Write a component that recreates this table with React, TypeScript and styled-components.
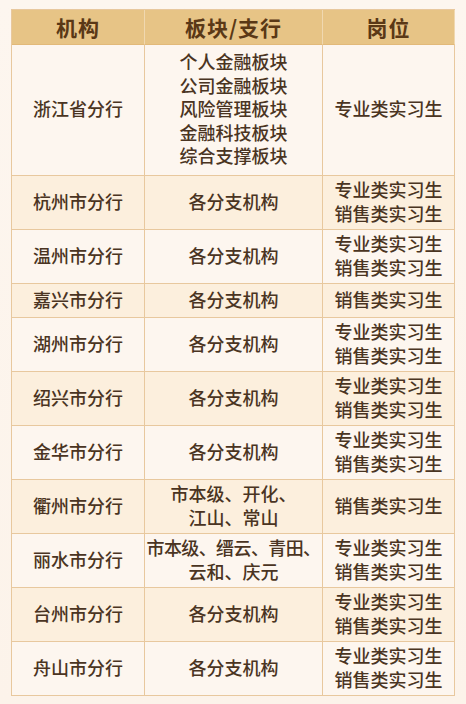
import React from "react";
import styled, { createGlobalStyle } from "styled-components";

const GlobalStyle = createGlobalStyle`
  html, body {
    margin: 0;
    padding: 0;
    background: #fdf5ee;
  }
  body {
    font-family: "Noto Sans CJK SC", "Noto Sans", sans-serif;
    color: #4a3422;
  }
`;

const Page = styled.div`
  width: 466px;
  height: 704px;
  box-sizing: border-box;
  padding: 9px 11px 0 11px;
  background: linear-gradient(180deg, #fdf6ef 0%, #fcf3ea 100%);
`;

const Table = styled.div`
  width: 444px;
  border-top: 1px solid #e8c89e;
  border-left: 1px solid #e8c89e;
  box-sizing: border-box;
`;

const Row = styled.div<{ $bg: string; $minH: number }>`
  display: grid;
  grid-template-columns: 133px 178px 132px;
  min-height: ${(p) => p.$minH}px;
  background: ${(p) => p.$bg};
`;

const HeadCell = styled.div`
  display: flex;
  align-items: center;
  justify-content: center;
  height: 34px;
  background: #e7c486;
  border-right: 1px solid #f0d8b0;
  border-bottom: 1px solid #e2b979;
  font-size: 21px;
  font-weight: 700;
  color: #5a3816;
  letter-spacing: 1px;
`;

const Cell = styled.div`
  display: flex;
  flex-direction: column;
  align-items: center;
  justify-content: center;
  padding: 2px 2px 4px;
  border-right: 1px solid #e8c89e;
  border-bottom: 1px solid #e8c89e;
  font-size: 18px;
  font-weight: 500;
  line-height: 23.5px;
  text-align: center;
  white-space: nowrap;
`;

const Line = styled.span<{ $tight?: boolean }>`
  letter-spacing: ${(p) => (p.$tight ? "-0.6px" : "0")};
`;

type Item = { org: string; branch: string[]; post: string[]; minH?: number };

const rows: Item[] = [
  {
    org: "浙江省分行",
    branch: ["个人金融板块", "公司金融板块", "风险管理板块", "金融科技板块", "综合支撑板块"],
    post: ["专业类实习生"],
    minH: 131,
  },
  { org: "杭州市分行", branch: ["各分支机构"], post: ["专业类实习生", "销售类实习生"] },
  { org: "温州市分行", branch: ["各分支机构"], post: ["专业类实习生", "销售类实习生"] },
  { org: "嘉兴市分行", branch: ["各分支机构"], post: ["销售类实习生"], minH: 34 },
  { org: "湖州市分行", branch: ["各分支机构"], post: ["专业类实习生", "销售类实习生"] },
  { org: "绍兴市分行", branch: ["各分支机构"], post: ["专业类实习生", "销售类实习生"] },
  { org: "金华市分行", branch: ["各分支机构"], post: ["专业类实习生", "销售类实习生"] },
  { org: "衢州市分行", branch: ["市本级、开化、", "江山、常山"], post: ["销售类实习生"] },
  { org: "丽水市分行", branch: ["市本级、缙云、青田、", "云和、庆元"], post: ["专业类实习生", "销售类实习生"] },
  { org: "台州市分行", branch: ["各分支机构"], post: ["专业类实习生", "销售类实习生"] },
  { org: "舟山市分行", branch: ["各分支机构"], post: ["专业类实习生", "销售类实习生"], minH: 52 },
];

const Lines = ({ items }: { items: string[] }) => (
  <>
    {items.map((t) => (
      <Line key={t} $tight={t.length > 8}>
        {t}
      </Line>
    ))}
  </>
);

export default function App() {
  return (
    <>
      <GlobalStyle />
      <Page>
        <Table>
          <Row $bg="#e7c486" $minH={35}>
            <HeadCell>机构</HeadCell>
            <HeadCell>板块/支行</HeadCell>
            <HeadCell>岗位</HeadCell>
          </Row>
          {rows.map((r, i) => (
            <Row key={r.org} $bg={i % 2 === 0 ? "#fdf6ef" : "#fcefdd"} $minH={r.minH ?? 54}>
              <Cell>{r.org}</Cell>
              <Cell>
                <Lines items={r.branch} />
              </Cell>
              <Cell>
                <Lines items={r.post} />
              </Cell>
            </Row>
          ))}
        </Table>
      </Page>
    </>
  );
}
